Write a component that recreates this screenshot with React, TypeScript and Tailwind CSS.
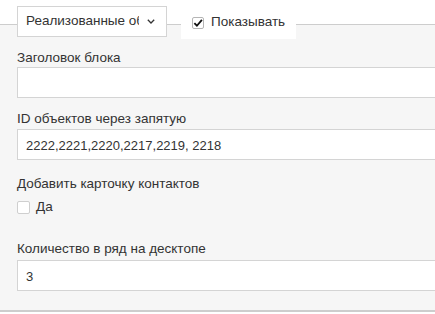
import React from 'react';

function Input({ value, className = '' }: { value?: string; className?: string }) {
  return (
    <div className={`h-[31px] -mr-[20px] border border-[#d4d4d4] bg-white pl-[8px] pt-[2px] flex items-center text-[13px] text-[#333] ${className}`}>
      {value}
    </div>
  );
}

export default function App() {
  return (
    <div className="w-[435px] h-[314px] overflow-hidden bg-white pt-[6px]" style={{ fontFamily: '"Liberation Sans", Arial, sans-serif' }}>
      <div className="relative z-10 flex items-start pl-[17px] h-[33px]">
        <div className="w-[150px] h-[31px] border border-[#d4d4d4] bg-white flex items-center pl-[8px] pr-[11px] text-[13.5px] text-[#333]">
          <span className="flex-1 overflow-hidden whitespace-nowrap">Реализованные объекты</span>
          <svg width="8" height="5" viewBox="0 0 8 5" className="ml-[8px] shrink-0">
            <path d="M0.8 0.8L4 4L7.2 0.8" fill="none" stroke="#333" strokeWidth="1.3" />
          </svg>
        </div>
        <label className="ml-[14px] h-[33px] bg-white flex items-center pl-[11px] pr-[11px] text-[13.5px] text-[#333]">
          <span className="w-[12px] h-[12px] border border-[#b5b5b5] rounded-[2px] bg-white flex items-center justify-center mr-[7px]">
            <svg width="11" height="10" viewBox="0 0 11 10">
              <path d="M1.5 5.2l2.8 2.8L9.8 1.5" fill="none" stroke="#111" strokeWidth="2" />
            </svg>
          </span>
          Показывать
        </label>
      </div>
      <div className="-mt-[15px] border-t border-b-2 border-[#cdcdcd] bg-[#f6f6f6] pl-[17px] pt-[25px] pb-[19px] flex flex-col text-[13.5px] leading-[16px] text-[#333]">
        <span>Заголовок блока</span>
        <Input className="mt-[1px]" />
        <span className="mt-[13px]">ID объектов через запятую</span>
        <Input className="mt-[2px] h-[30px]" value="2222,2221,2220,2217,2219, 2218" />
        <span className="mt-[16px]">Добавить карточку контактов</span>
        <label className="mt-[7px] h-[16px] flex items-center">
          <span className="w-[13px] h-[13px] border border-[#cfcfcf] rounded-[2px] bg-white mr-[6px]" />
          Да
        </label>
        <span className="mt-[26px]">Количество в ряд на десктопе</span>
        <Input className="mt-[3px]" value="3" />
      </div>
    </div>
  );
}
